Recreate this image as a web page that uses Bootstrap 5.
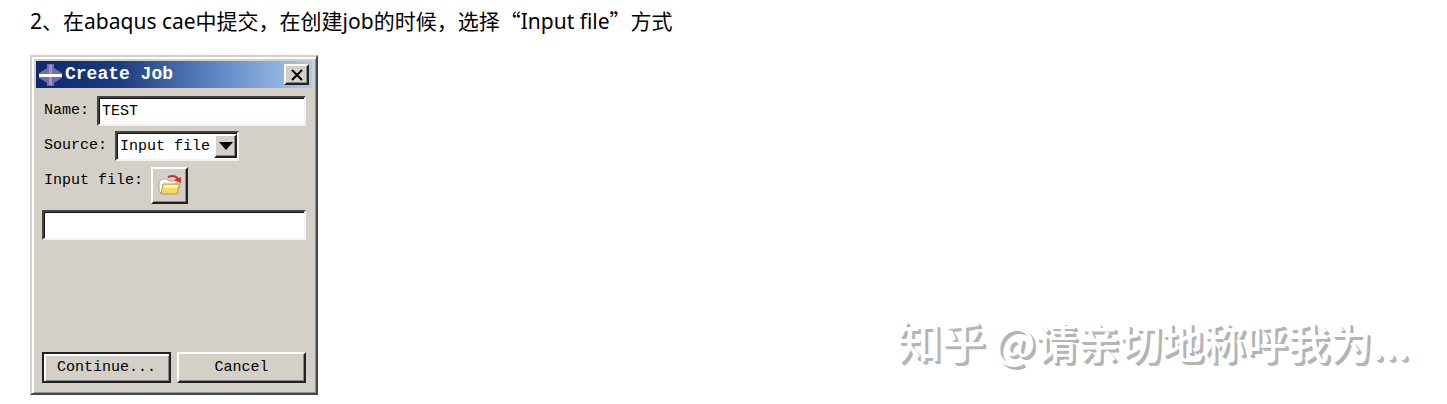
<!DOCTYPE html>
<html lang="zh-CN">
<head>
<meta charset="utf-8">
<meta name="viewport" content="width=device-width, initial-scale=1">
<title>Create Job</title>
<link href="https://cdn.jsdelivr.net/npm/bootstrap@5.3.0/dist/css/bootstrap.min.css" rel="stylesheet">
<style>
  body { font-family: "Noto Sans", "Noto Sans CJK SC", sans-serif; color: #111; background: #fff; }
  .page { padding: 5px 30px 9px; }
  .step { font: 21px/30px "Noto Sans CJK SC", sans-serif; color: #000; margin-bottom: 19px; }
  .step span { font-family: "Noto Sans", sans-serif; }
  .dialog { width: 288px; min-height: 340px; background: #d4d0c8; border: 2px solid; border-color: #d4d0c8 #45484c #45484c #d4d0c8;
    box-shadow: inset 2px 2px #fff, inset -1px -1px #909090; padding: 4px; font: 15px/20px "Liberation Mono", monospace; color: #000; }
  .titlebar { height: 27px; padding: 0 3px 0 2px; background: linear-gradient(90deg, #0d286d, #1c3c80 30%, #5f86c2 65%, #a6caf0); }
  .titlebar h1 { font: bold 18px/27px "Liberation Mono", monospace; color: #fff; margin: 0 0 0 2px; }
  .fields { padding: 8px 6px 0; }
  .fields label { margin: 0 8px 0 2px; }
  .raised { background: #d4d0c8; border: 2px solid; border-color: #fff #222 #222 #fff; border-radius: 0; box-shadow: inset -1px -1px #888; color: #000; padding: 0; font: inherit; }
  .well { border: 2px solid; border-color: #444 #f4f2ee #f4f2ee #444; background: #fff; height: 30px; }
  .well > input, .well > select { width: 100%; height: 26px; border: solid #111; border-width: 1px 0 0 1px; border-radius: 0; background: #fff; color: #000; padding: 0 2px; font: inherit; appearance: none; outline: 0; display: block; }
  .close-btn { width: 25px; height: 21px; }
  .combo { width: 124px; }
  .arrow { width: 23px; height: 24px; top: 1px; right: 0; pointer-events: none; }
  .file-btn { width: 37px; height: 37px; }
  .source-row { margin: 5px 0 6px; }
  .file-row { margin-bottom: 6px; }
  .actions { gap: 6px; padding: 0 6px 6px; }
  .actions button { height: 31px; }
  .raised.default { border-color: #222; box-shadow: inset 2px 2px #fff, inset -1px -1px #888; }
  .watermark { font: 42px/60px "Noto Sans CJK SC", sans-serif; font-weight: 500; color: #fff; text-shadow: 2px 2px 0 #b4b4b4, 3px 3px 0 #b4b4b4; padding: 0 8px 24px 0; white-space: nowrap; }
  .watermark b { font-size: 44px; font-weight: 500; }
</style>
</head>
<body>
<main class="page">
  <p class="step"><span>2</span>、在<span>abaqus cae</span>中提交，在创建<span>job</span>的时候，选择“<span>Input file</span>”方式</p>
  <div class="d-flex justify-content-between align-items-end">
    <form class="dialog d-flex flex-column">
      <header class="titlebar d-flex align-items-center">
        <svg width="25" height="24" viewBox="0 0 25 24" aria-hidden="true">
          <path d="M9 1h7v4l3 2 5 3v5l-5 3-3 2v3H9v-3l-3-2-5-3v-5l5-3 3-2z" fill="#6f6eaa"/>
          <path d="M11 2h3v20h-3z" fill="#9b98c4"/>
          <path d="M1 11h23v3H1z" fill="#fff"/>
        </svg>
        <h1 class="flex-grow-1">Create Job</h1>
        <button type="button" class="raised close-btn d-flex align-items-center justify-content-center" aria-label="Close">
          <svg width="14" height="12" viewBox="0 0 14 12"><path d="M2 1l10 10M12 1L2 11" stroke="#000" stroke-width="2"/></svg>
        </button>
      </header>
      <div class="fields flex-grow-1">
        <div class="d-flex align-items-center">
          <label for="name">Name:</label>
          <div class="well flex-grow-1"><input id="name" type="text" value="TEST"></div>
        </div>
        <div class="source-row d-flex align-items-center">
          <label for="source">Source:</label>
          <div class="well combo position-relative">
            <select id="source"><option>Input file</option></select>
            <span class="raised arrow position-absolute d-flex align-items-center justify-content-center">
              <svg width="16" height="9" viewBox="0 0 16 9"><path d="M1 0h14L8 8z" fill="#000"/></svg>
            </span>
          </div>
        </div>
        <div class="file-row d-flex align-items-start">
          <label for="path" class="mt-1">Input file:</label>
          <button type="button" class="raised file-btn d-flex align-items-center justify-content-center" aria-label="Select file">
            <svg width="26" height="26" viewBox="0 0 26 26">
              <path d="M2 9l3-3h5l2 2h7v12H4L2 18z" fill="#faf8ee" stroke="#aaa69e"/>
              <path d="M6 11h17l-3 10H4z" fill="#f7d75c" stroke="#b5985a"/>
              <path d="M7 12h14l-1 3H6z" fill="#fff1ad"/>
              <path d="M11 4c5-2 9-1 10 3" fill="none" stroke="#cf3030" stroke-width="2"/>
              <path d="M17 7l7-3v6z" fill="#cf3030"/>
            </svg>
          </button>
        </div>
        <div class="well"><input id="path" type="text"></div>
      </div>
      <div class="actions d-flex">
        <button type="button" class="raised default flex-fill w-50">Continue...</button>
        <button type="button" class="raised flex-fill w-50">Cancel</button>
      </div>
    </form>
    <div class="watermark"><b>知乎</b> @请亲切地称呼我为...</div>
  </div>
</main>
</body>
</html>
